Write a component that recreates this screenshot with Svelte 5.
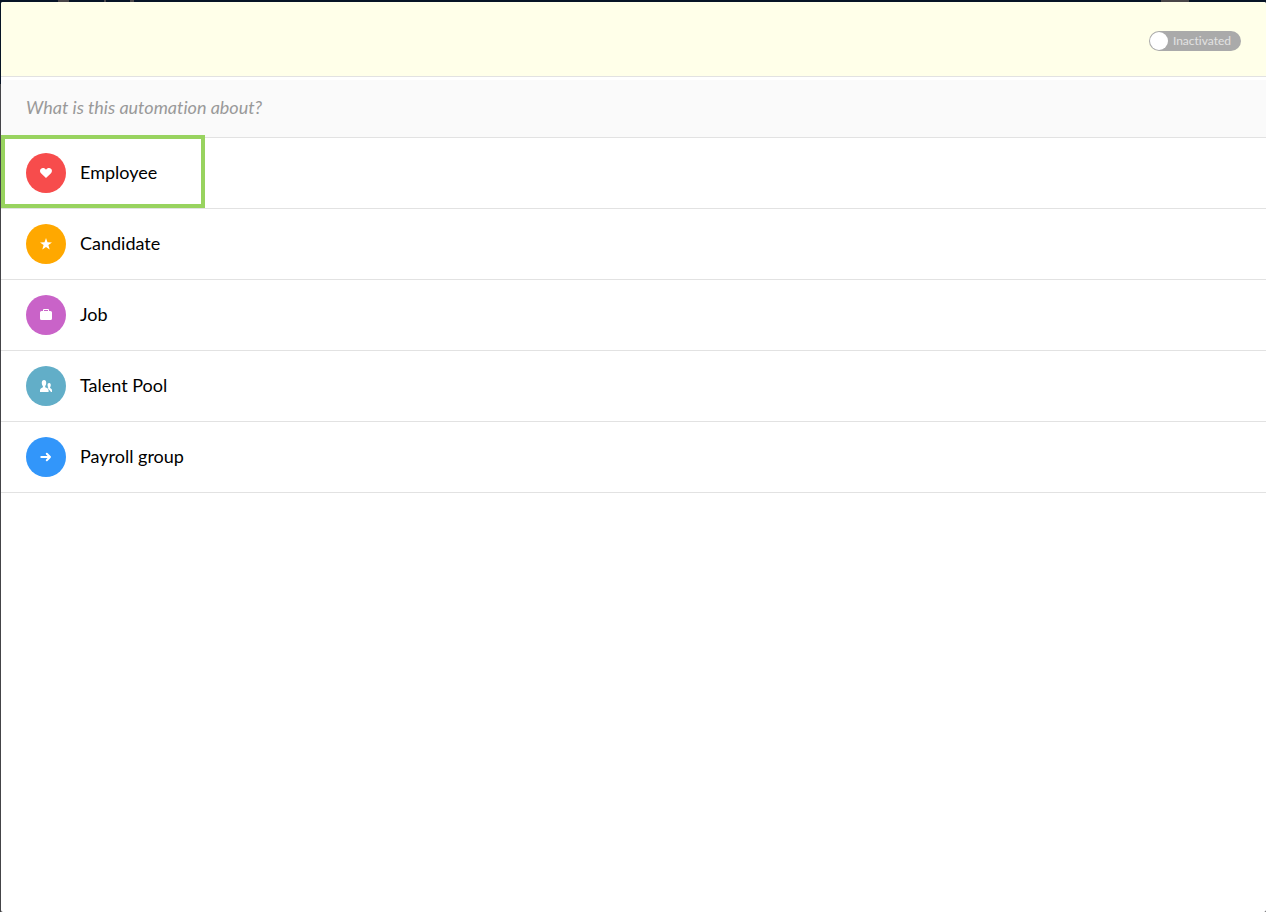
<script>
  let activated = false;
  let selected = "employee";

  const subjects = [
    { id: "employee", label: "Employee", color: "#f74c4c" },
    { id: "candidate", label: "Candidate", color: "#ffa800" },
    { id: "job", label: "Job", color: "#c963c8" },
    { id: "pool", label: "Talent Pool", color: "#62aec8" },
    { id: "payroll", label: "Payroll group", color: "#3296fa" },
  ];
</script>

<div class="backdrop">
  <main class="dialog">
    <header class="header">
      <label class="toggle" class:on={activated}>
        <input type="checkbox" role="switch" bind:checked={activated} />
        <span class="knob"></span>
        <span>{activated ? "Activated" : "Inactivated"}</span>
      </label>
    </header>

    <h1 class="question">What is this automation about?</h1>

    <ul class="subjects">
      {#each subjects as subject}
        <li>
          <button
            class="subject"
            class:selected={subject.id === selected}
            on:click={() => (selected = subject.id)}
          >
            <span class="icon" style="background: {subject.color}">
              <svg viewBox="0 0 14 14" width="14" height="14" aria-hidden="true">
                {#if subject.id === "employee"}
                  <path d="M7 12 2 7.2C.4 5.4.9 2.8 3.1 2.2 4.7 1.8 6.1 2.4 7 3.8 7.9 2.4 9.3 1.8 10.9 2.2 13.1 2.8 13.6 5.4 12 7.2Z" />
                {:else if subject.id === "candidate"}
                  <path d="M7 1 8.5 5.3 13 5.4 9.4 8.1 10.7 12.6 7 9.9 3.3 12.6 4.6 8.1 1 5.4 5.5 5.3Z" />
                {:else if subject.id === "job"}
                  <path fill-rule="evenodd" d="M4 3V2Q4 1 5 1H9Q10 1 10 2V3H11.5Q13 3 13 4.5V10.5Q13 12 11.5 12H2.5Q1 12 1 10.5V4.5Q1 3 2.5 3ZM5 3H9V2H5Z" />
                {:else if subject.id === "pool"}
                  <path d="M5 1C6.7 1 7.4 2.3 7.2 4.3 7.1 5.7 6.6 6.5 6.2 7V8.3C7.8 9.3 9.4 9.3 9.6 11V13H1V11C1.2 9.3 2.8 9.2 3.9 8.3V7C3.3 6.4 2.9 5.7 2.8 4.3 2.6 2.3 3.4 1 5 1Z" />
                  <path d="M10.2 4C11.4 4 11.9 5 11.8 6.3 11.7 7.3 11.4 7.8 11.1 8.2V9C12.2 9.8 13 10 13 11.4V13H12L8.7 8.9 9.3 8.2C8.8 7.7 8.6 7.1 8.6 6.2 8.5 4.9 9 4 10.2 4Z" />
                {:else}
                  <path class="stroke" d="M2.3 7H11M7.8 3.8 11 7 7.8 10.2" />
                {/if}
              </svg>
            </span>
            <span class="label">{subject.label}</span>
          </button>
        </li>
      {/each}
    </ul>
  </main>
</div>

<style>
  :global(body) {
    background: #444448;
  }

  .backdrop {
    min-height: 100vh;
    box-sizing: border-box;
    padding: 2px 0 0 1px;
    display: flex;
    background:
      linear-gradient(#4a4648, #4a4648) 58px 0 / 11px 2px no-repeat,
      linear-gradient(#4a4648, #4a4648) 104px 0 / 2px 2px no-repeat,
      linear-gradient(#4a4648, #4a4648) 130px 0 / 4px 2px no-repeat,
      linear-gradient(#4a4648, #4a4648) right 77px top 0 / 28px 2px no-repeat,
      linear-gradient(#071426 84px, #444448 84px);
    font-family: Lato, "Open Sans", sans-serif;
    font-variant-ligatures: none;
  }

  .dialog {
    flex: 1;
    background: #fff;
    border-radius: 2px;
    overflow: hidden;
  }

  .header {
    display: flex;
    align-items: center;
    justify-content: flex-end;
    padding: 29px 25px 25px;
    background: #ffffe9;
    border-bottom: 1px solid #e2e2e2;
  }

  .toggle {
    position: relative;
    display: flex;
    align-items: center;
    gap: 5px;
    height: 20px;
    padding: 0 10px 0 1px;
    box-sizing: border-box;
    border-radius: 10px;
    background: #aaa;
    color: #e2e2e2;
    font-size: 12px;
    line-height: 20px;
    cursor: pointer;
  }

  .toggle input {
    position: absolute;
    inset: 0;
    width: 100%;
    height: 100%;
    margin: 0;
    opacity: 0;
    cursor: pointer;
  }

  .toggle.on {
    flex-direction: row-reverse;
    padding: 0 1px 0 10px;
    background: #98d35f;
    color: #fff;
  }

  .knob {
    width: 18px;
    height: 18px;
    border-radius: 50%;
    background: #fff;
  }

  .question {
    margin: 3px 0 0;
    padding: 15px 25px 18px;
    background: #fafafa;
    border-bottom: 1px solid #e2e2e2;
    color: #999;
    font-size: 18px;
    font-style: italic;
    font-weight: 400;
    line-height: 24px;
  }

  .subjects {
    margin: 0;
    padding: 0;
    list-style: none;
  }

  .subjects li {
    border-bottom: 1px solid #e2e2e2;
  }

  .subject {
    position: relative;
    display: flex;
    align-items: center;
    gap: 14px;
    width: 100%;
    padding: 15px 25px;
    border: none;
    background: none;
    color: #000;
    font-family: inherit;
    font-size: 18px;
    line-height: 24px;
    text-align: left;
    cursor: pointer;
  }

  .subject.selected::after {
    content: "";
    position: absolute;
    top: -3px;
    bottom: 0;
    left: 0;
    width: 204px;
    box-sizing: border-box;
    border: 4px solid #98d35f;
    pointer-events: none;
  }

  .icon {
    display: flex;
    align-items: center;
    justify-content: center;
    width: 40px;
    height: 40px;
    border-radius: 50%;
  }

  .icon svg {
    fill: #fff;
  }

  .icon .stroke {
    fill: none;
    stroke: #fff;
    stroke-width: 2;
    stroke-linecap: round;
    stroke-linejoin: round;
  }

  .label {
    padding-bottom: 2px;
  }
</style>
